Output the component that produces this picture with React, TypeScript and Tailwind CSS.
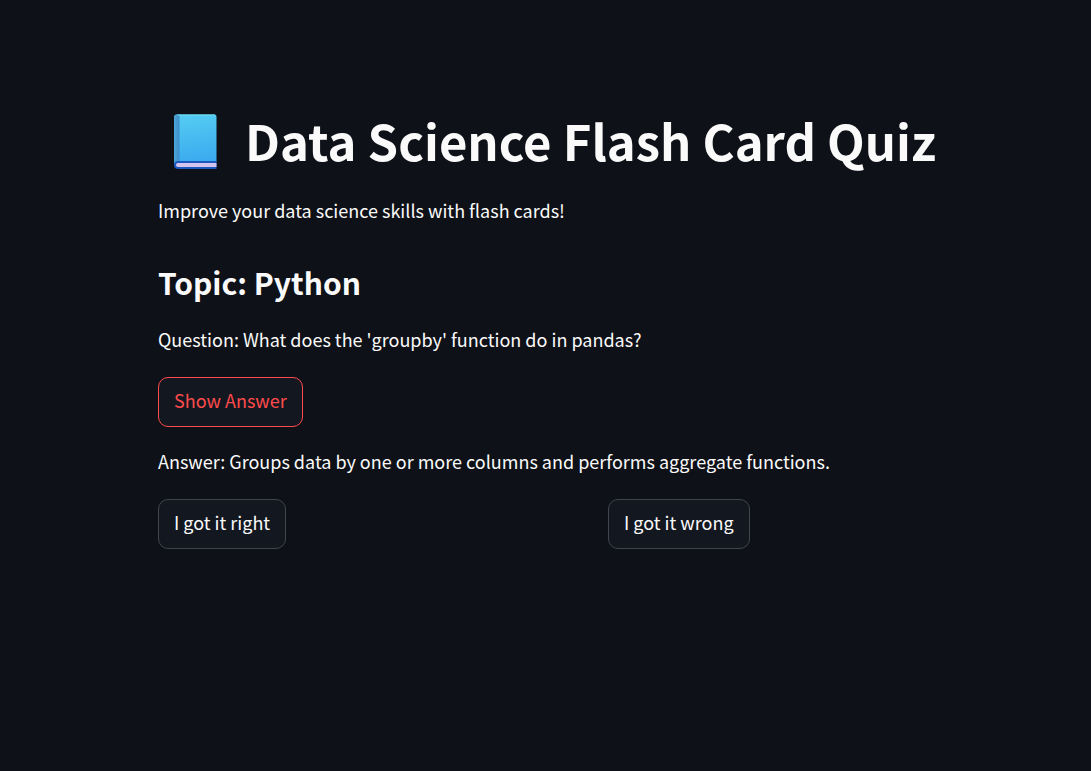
import type { ReactNode } from "react";

function BookIcon() {
  return (
    <svg viewBox="0 0 44 56" className="mt-1 h-14 w-11 shrink-0" aria-hidden="true">
      <defs>
        <linearGradient id="cover" x1="0" y1="0" x2="0.1" y2="1">
          <stop offset="0" stopColor="#55cdf2" />
          <stop offset="1" stopColor="#3aa9ef" />
        </linearGradient>
        <linearGradient id="spine" x1="0" y1="0" x2="1" y2="0">
          <stop offset="0" stopColor="#4ba6d8" />
          <stop offset="1" stopColor="#3f8dc8" />
        </linearGradient>
      </defs>
      <path d="M4 .5h37.500a2 2 0 0 1 2 2V48H4l-3 4V3.500a3 3 0 0 1 3-3z" fill="url(#cover)" />
      <path d="M4 .5h2.500V47C3 47 1 49 1 51V3.500a3 3 0 0 1 3-3z" fill="url(#spine)" />
      <path d="M4.500 1h37.500" stroke="#75e2f5" strokeWidth="1" />
      <path d="M5 47h38.500v8H5a4 4 0 0 1 0-8z" fill="#1b58bf" />
      <path d="M5 49h38.500v4H5a2 2 0 0 1 0-4z" fill="#d4c4ed" />
    </svg>
  );
}

function QuizButton({ children, active = false }: { children: ReactNode; active?: boolean }) {
  return (
    <button
      type="button"
      className={
        active
          ? "h-[50px] rounded-[10px] border border-[#ff4b4b] bg-[#131720] px-[15px] pb-1 text-lg text-[#ff4b4b]"
          : "h-[50px] rounded-[10px] border border-[#41444c] bg-[#131720] px-[15px] pb-1 text-lg text-[#fafafa]"
      }
    >
      {children}
    </button>
  );
}

export default function App() {
  return (
    <main className="min-h-screen bg-[#0e1117] pt-[107px] pr-[53px] pb-20 pl-[158px] font-['Noto_Sans_CJK_SC','Noto_Sans',sans-serif] text-lg text-[#fafafa]">
      <h1 className="flex items-center gap-7 pl-[15px] text-[49px] leading-[66px] font-bold">
        <BookIcon />
        Data Science Flash Card Quiz
      </h1>
      <p className="mt-[23px] leading-7">Improve your data science skills with flash cards!</p>
      <h2 className="mt-[38px] text-[30px] leading-10 font-bold">Topic: Python</h2>
      <p className="mt-[23px] leading-7">Question: What does the 'groupby' function do in pandas?</p>
      <div className="mt-6 flex">
        <QuizButton active>Show Answer</QuizButton>
      </div>
      <p className="mt-5 leading-7">Answer: Groups data by one or more columns and performs aggregate functions.</p>
      <div className="mt-6 grid grid-cols-2 gap-5">
        <div>
          <QuizButton>I got it right</QuizButton>
        </div>
        <div>
          <QuizButton>I got it wrong</QuizButton>
        </div>
      </div>
    </main>
  );
}
